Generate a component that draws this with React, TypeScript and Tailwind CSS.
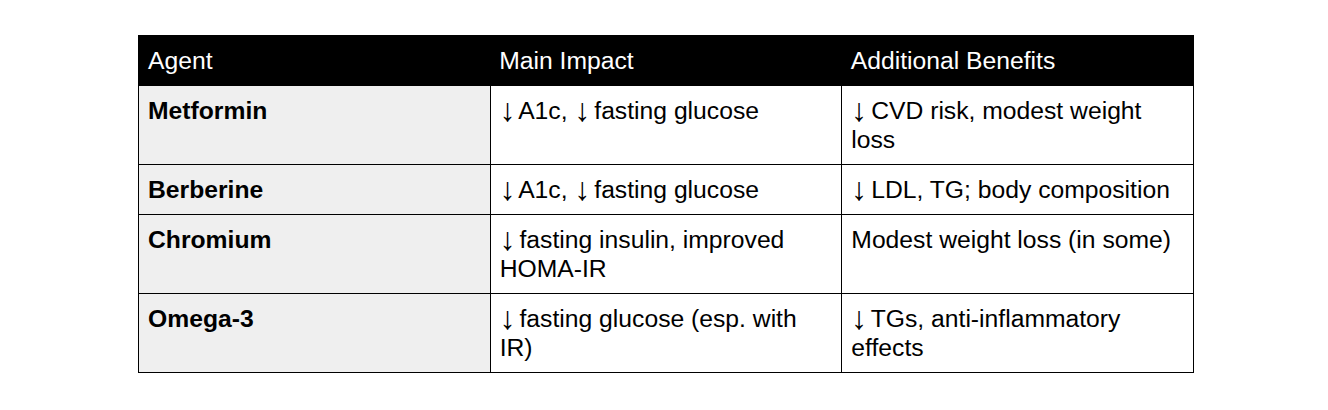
const Down = () => (
  <span className="-mr-[3px] inline-block h-[29px] align-top text-[32px] leading-[29px]">↓</span>
);

const withArrows = (text: string) =>
  text.split('↓').map((part, i) => (
    <span key={i}>
      {i > 0 && <Down />}
      {part}
    </span>
  ));

const rows = [
  {
    agent: 'Metformin',
    impact: '↓ A1c, ↓ fasting glucose',
    benefits: '↓ CVD risk, modest weight loss',
  },
  {
    agent: 'Berberine',
    impact: '↓ A1c, ↓ fasting glucose',
    benefits: '↓ LDL, TG; body composition',
  },
  {
    agent: 'Chromium',
    impact: '↓ fasting insulin, improved HOMA-IR',
    benefits: 'Modest weight loss (in some)',
  },
  {
    agent: 'Omega-3',
    impact: '↓ fasting glucose (esp. with IR)',
    benefits: '↓ TGs, anti-inflammatory effects',
  },
];

const App = () => {
  return (
    <div className="min-h-[410px] bg-white pt-[35px] pl-[138px] font-['Liberation_Sans',Arial,sans-serif] text-black">
      <table className="w-[1056px] table-fixed border-collapse border-[1.5px] border-black text-[24.7px] leading-[29px]">
        <thead>
          <tr className="bg-black text-white">
            <th className="w-1/3 px-[9px] py-[10px] text-left font-normal">Agent</th>
            <th className="w-1/3 px-[9px] py-[10px] text-left font-normal">Main Impact</th>
            <th className="w-1/3 px-[9px] py-[10px] text-left font-normal">Additional Benefits</th>
          </tr>
        </thead>
        <tbody>
          {rows.map((row) => (
            <tr key={row.agent}>
              <td className="border border-black bg-[#efefef] px-[9px] py-[10px] align-top font-bold">
                {row.agent}
              </td>
              <td className="border border-black px-[9px] py-[10px] align-top">{withArrows(row.impact)}</td>
              <td className="border border-black px-[9px] py-[10px] align-top">{withArrows(row.benefits)}</td>
            </tr>
          ))}
        </tbody>
      </table>
    </div>
  );
};

export default App;
